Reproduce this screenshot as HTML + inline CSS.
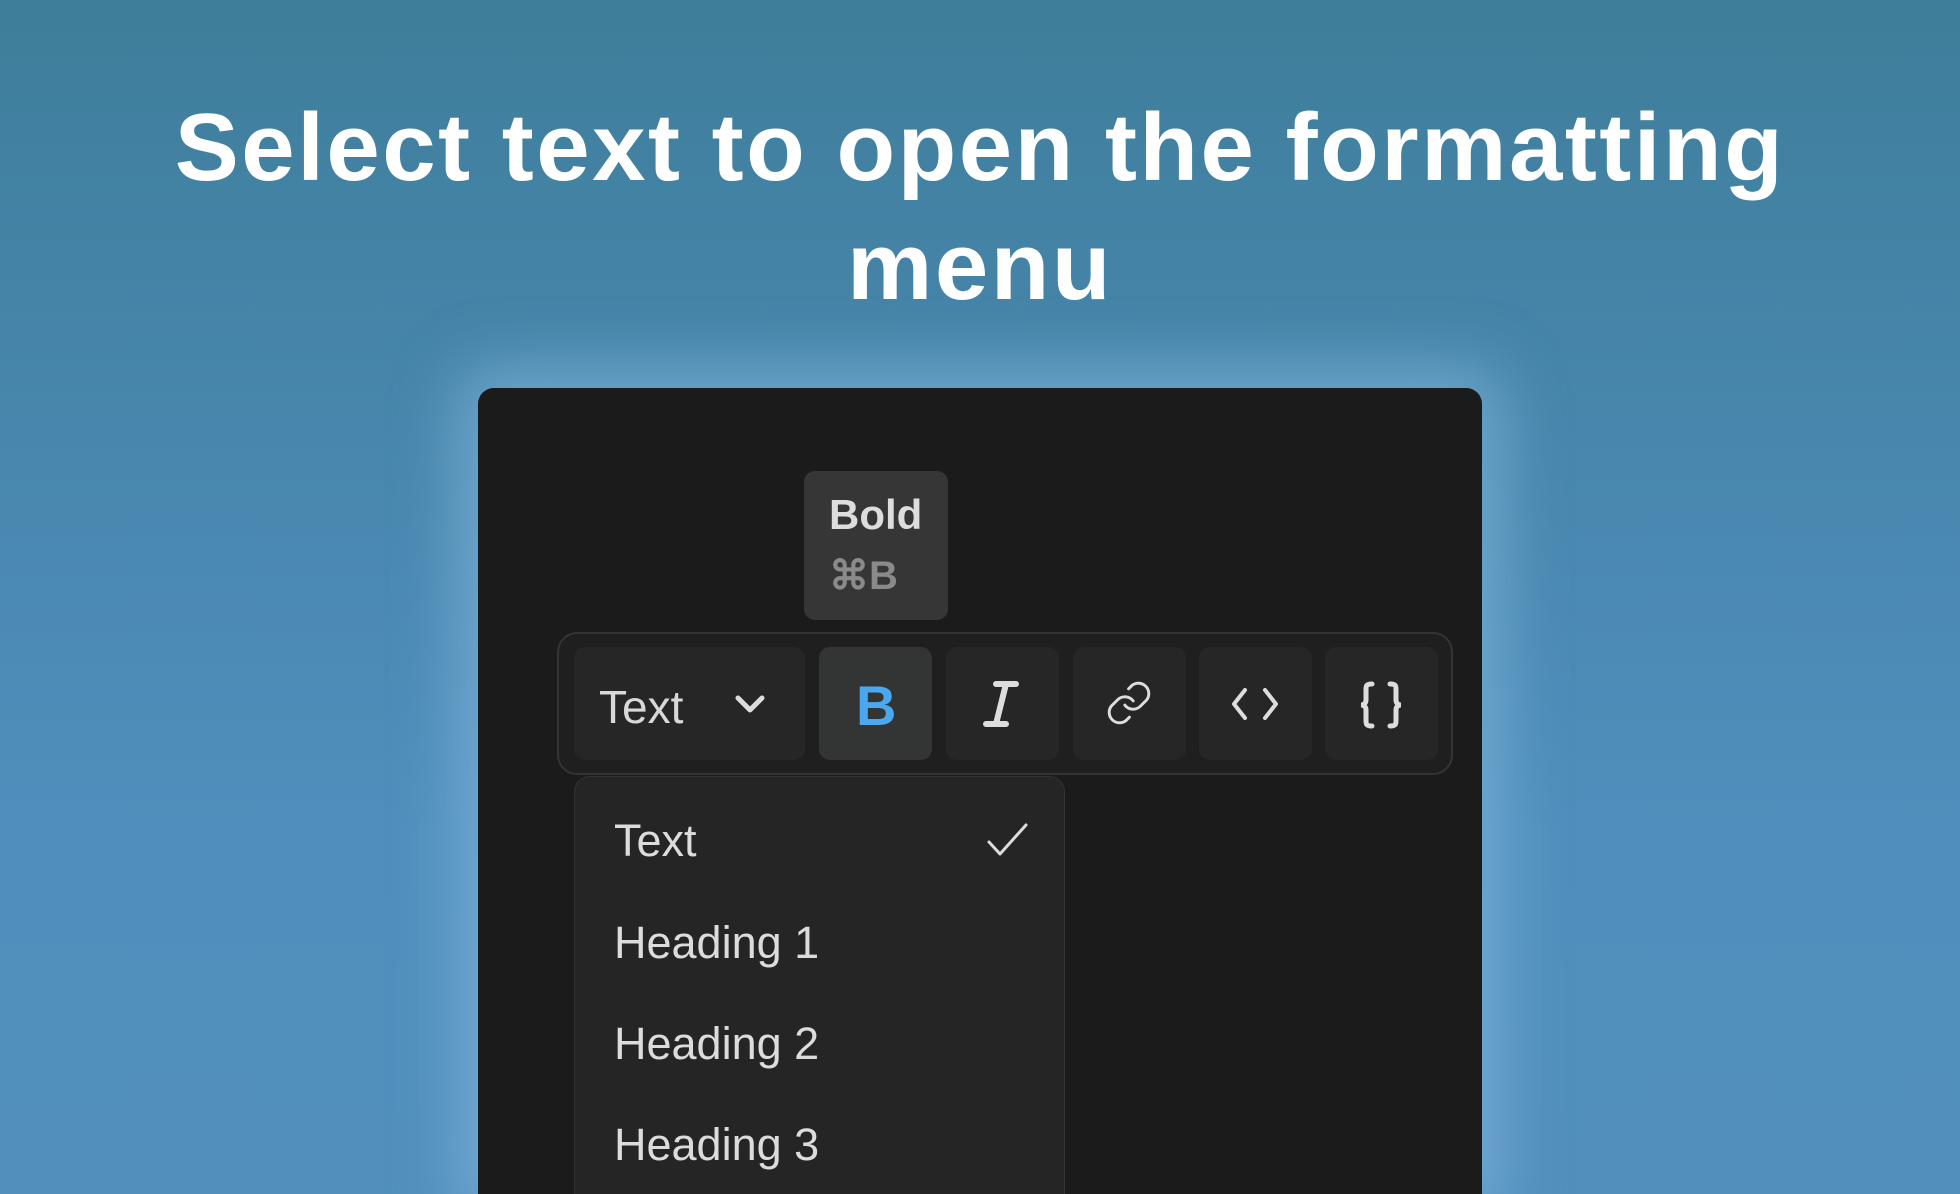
<!DOCTYPE html>
<html><head><meta charset="utf-8"><style>
*{margin:0;padding:0;box-sizing:border-box}
html,body{width:1960px;height:1194px;overflow:hidden}
body{position:relative;font-family:"Liberation Sans",sans-serif;
background:linear-gradient(180deg,#3e7e9a 0%,#4886ad 35%,#508fbd 70%,#528fbd 100%);}
.glow{position:absolute;left:478px;top:388px;width:1004px;height:806px;border-radius:16px 16px 0 0;box-shadow:0 0 60px 22px rgba(140,190,225,.55);}
h1{position:absolute;left:0;width:1960px;text-align:center;color:#fff;font-weight:700;font-size:96px;letter-spacing:2.5px;line-height:119px;top:88px;white-space:nowrap}
.panel{position:absolute;left:478px;top:388px;width:1004px;height:806px;background:#1b1b1b;border-radius:16px 16px 0 0;overflow:hidden}
.tip{position:absolute;left:326px;top:83px;width:144px;height:149px;background:#363636;border-radius:11px}
.tip .a{position:absolute;left:25px;top:20px;font-size:42px;font-weight:700;color:#ddd}
.tip .b{position:absolute;left:25px;top:82px;font-size:40px;font-weight:700;color:#8a8a8a}
.bar{position:absolute;left:79px;top:244px;width:896px;height:143px;background:#1f1f1f;border:2px solid #343434;border-radius:20px}
.btn{position:absolute;top:259px;height:113px;width:113px;background:#262626;border-radius:11px}
.drop{position:absolute;left:96px;top:388px;width:491px;height:440px;background:#252525;border:1.5px solid #333;border-radius:16px}
.it{position:absolute;left:136px;font-size:45px;color:#dcdcdc}
svg{position:absolute}
</style></head><body>
<div class="glow"></div>
<h1>Select text to open the formatting<br>menu</h1>
<div class="panel">
<div class="tip"><div class="a">Bold</div><div class="b">⌘B</div></div>
<div class="bar"></div>
<div class="btn" style="left:96px;width:231px"></div>
<div class="it" style="left:121px;top:292px;font-size:46px;color:#d8d8d8">Text</div>
<svg style="left:256px;top:305px" width="32" height="22" viewBox="0 0 32 22"><path d="M4 5 L16 17 L28 5" fill="none" stroke="#ddd" stroke-width="5" stroke-linecap="round" stroke-linejoin="round"/></svg>
<div class="btn" style="left:341px;background:#333534"></div>
<div class="btn" style="left:468px"></div>
<div class="btn" style="left:595px"></div>
<div class="btn" style="left:721px"></div>
<div class="btn" style="left:847px"></div>
<div style="position:absolute;left:378px;top:285px;font-size:56px;font-weight:700;color:#4aa8f0">B</div>
<svg style="left:498px;top:292px" width="54" height="48" viewBox="0 0 54 48"><path d="M20 4H40M10 44H30M30 4L20 44" fill="none" stroke="#ddd" stroke-width="6" stroke-linecap="round"/></svg>
<svg style="left:626px;top:290px" width="50" height="50" viewBox="0 0 24 24"><path d="M10 13a5 5 0 0 0 7.5.5l3-3a5 5 0 0 0-7-7l-1.7 1.7M14 11a5 5 0 0 0-7.5-.5l-3 3a5 5 0 0 0 7 7l1.7-1.7" fill="none" stroke="#ddd" stroke-width="1.4" stroke-linecap="round"/></svg>
<svg style="left:752px;top:296px" width="50" height="40" viewBox="0 0 50 40"><path d="M15 6L4 20L15 34M35 6L46 20L35 34" fill="none" stroke="#ddd" stroke-width="4" stroke-linecap="round" stroke-linejoin="round"/></svg>
<svg style="left:878px;top:292px" width="50" height="50" viewBox="0 0 50 50"><path d="M16 4C10 4 10 6 10 10V20C10 23 8 25 5 25C8 25 10 27 10 30V40C10 44 10 46 16 46M34 4C40 4 40 6 40 10V20C40 23 42 25 45 25C42 25 40 27 40 30V40C40 44 40 46 34 46" fill="none" stroke="#ddd" stroke-width="5" stroke-linecap="round"/></svg>
<div class="drop"></div>
<div class="it" style="top:427px">Text</div>
<svg style="left:508px;top:434px" width="44" height="38" viewBox="0 0 44 38"><path d="M3 20L14 32L40 3" fill="none" stroke="#ddd" stroke-width="3" stroke-linecap="round" stroke-linejoin="round"/></svg>
<div class="it" style="top:529px">Heading 1</div>
<div class="it" style="top:630px">Heading 2</div>
<div class="it" style="top:731px">Heading 3</div>
</div>
</body></html>
